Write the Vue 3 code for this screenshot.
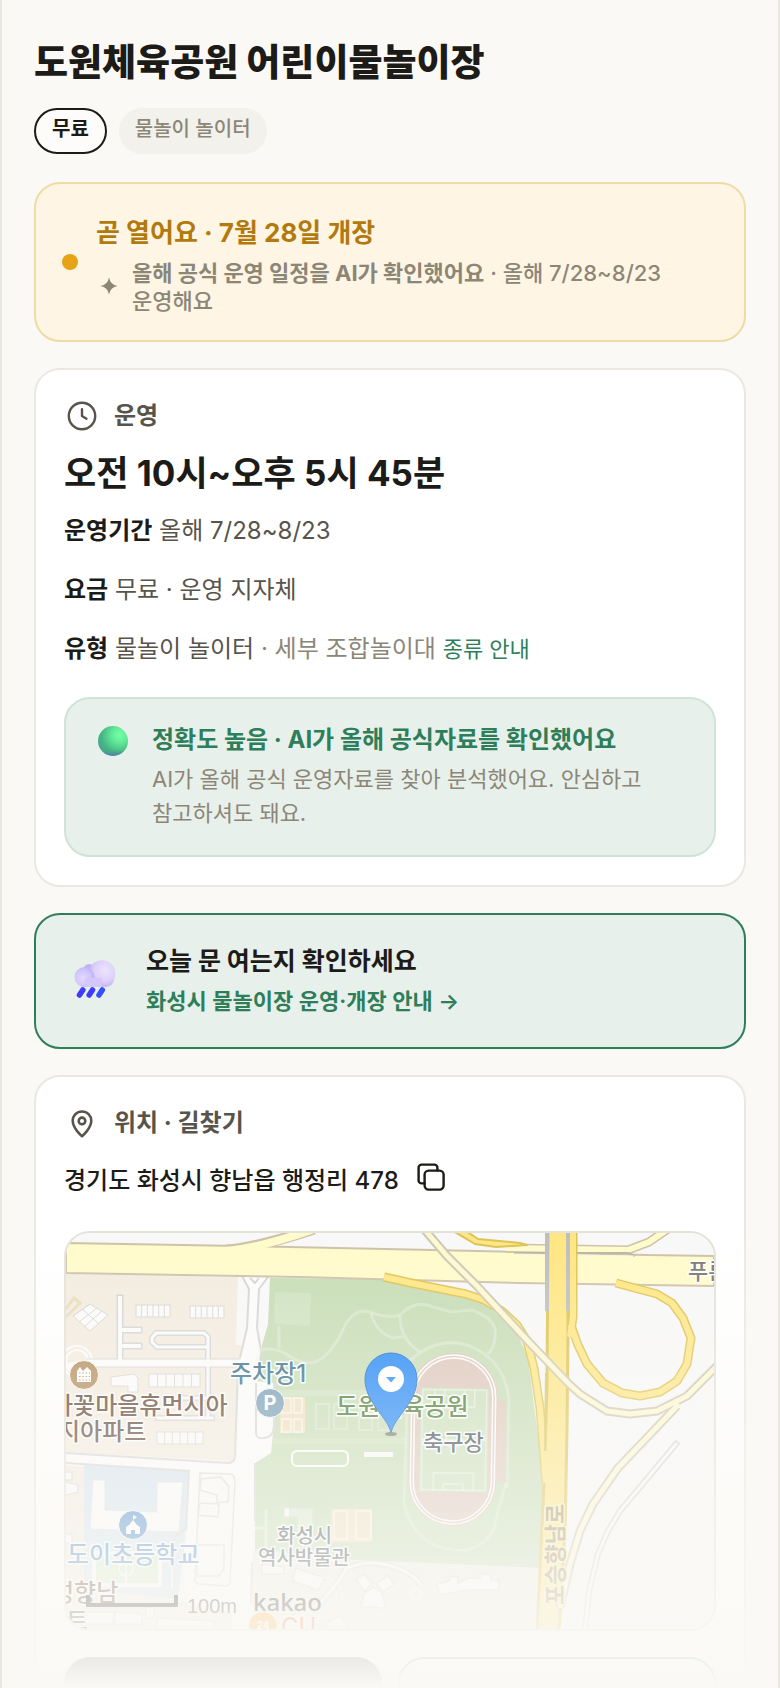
<script setup>
const rows = [
  { label: '운영기간', value: '올해 7/28~8/23' },
  { label: '요금', value: '무료 · 운영 지자체' },
]

const carRows = [
  { x: 70, y: 72, w: 34, h: 12, n: 6 },
  { x: 124, y: 73, w: 34, h: 12, n: 6 },
  { x: 83, y: 141, w: 51, h: 13, n: 6 },
  { x: 91, y: 199, w: 46, h: 12, n: 6 },
]

const courts = [
  [216, 165, 9, 15], [228, 165, 8, 15], [216, 186, 9, 13], [228, 186, 8, 13],
]
const paleCourts = [
  [250, 171, 13, 25], [268, 171, 13, 25], [293, 174, 13, 23], [312, 174, 13, 23],
]
</script>

<template>
  <main class="page">
    <header class="head">
      <h1>도원체육공원 어린이물놀이장</h1>
      <div class="tags">
        <span class="tag tag-free">무료</span>
        <span class="tag">물놀이 놀이터</span>
      </div>
    </header>

    <section class="status">
      <span class="dot"></span>
      <div class="status-body">
        <h2>곧 열어요 · 7월 28일 개장</h2>
        <div class="note">
          <svg class="spark" viewBox="0 0 26 26" aria-hidden="true">
            <path d="M13 3.500Q14.300 10.700 21.500 12Q14.300 13.300 13 20.500Q11.700 13.300 4.500 12Q11.700 10.700 13 3.500Z" fill="currentColor" />
          </svg>
          <p><strong>올해 공식 운영 일정을 AI가 확인했어요</strong> · 올해 7/28~8/23 운영해요</p>
        </div>
      </div>
    </section>

    <section class="card">
      <h2 class="card-title">
        <svg viewBox="0 0 24 24" aria-hidden="true" fill="none" stroke="currentColor" stroke-width="1.6" stroke-linecap="round" stroke-linejoin="round">
          <circle cx="12" cy="12" r="8.800" />
          <path d="M12 7.400V12L15 13.800" />
        </svg>
        운영
      </h2>
      <p class="hours">오전 10시~오후 5시 45분</p>
      <div class="rows">
        <p v-for="r in rows" :key="r.label"><b>{{ r.label }}</b> {{ r.value }}</p>
        <p><b>유형</b> 물놀이 놀이터 <span class="muted">· 세부 조합놀이대</span> <a href="#types">종류 안내</a></p>
      </div>
      <div class="trust">
        <svg class="orb" viewBox="0 0 30 30" aria-hidden="true">
          <defs>
            <radialGradient id="orb" cx="0.720" cy="0.300" r="0.800">
              <stop offset="0" stop-color="#72ffa6" />
              <stop offset="0.300" stop-color="#63ec98" />
              <stop offset="0.750" stop-color="#45b582" />
              <stop offset="1" stop-color="#4aa391" />
            </radialGradient>
            <linearGradient id="orbShade" x1="0" y1="0" x2="0" y2="1">
              <stop offset="0.800" stop-color="#5279a8" stop-opacity="0" />
              <stop offset="1" stop-color="#5279a8" stop-opacity="0.800" />
            </linearGradient>
          </defs>
          <circle cx="15" cy="15" r="15" fill="url(#orb)" />
          <circle cx="15" cy="15" r="15" fill="url(#orbShade)" />
        </svg>
        <div>
          <h3>정확도 높음 · AI가 올해 공식자료를 확인했어요</h3>
          <p>AI가 올해 공식 운영자료를 찾아 분석했어요. 안심하고 참고하셔도 돼요.</p>
        </div>
      </div>
    </section>

    <a class="notice" href="#today">
      <svg class="cloud" viewBox="0 0 48 48" aria-hidden="true">
        <defs>
          <radialGradient id="cl" cx="0.620" cy="0.380" r="0.650">
            <stop offset="0" stop-color="#eee4fc" />
            <stop offset="0.650" stop-color="#dccffa" />
            <stop offset="1" stop-color="#bdb0f2" />
          </radialGradient>
          <radialGradient id="cs" cx="0.400" cy="0.550" r="0.620">
            <stop offset="0" stop-color="#e2dafd" />
            <stop offset="0.600" stop-color="#d2c7fc" />
            <stop offset="1" stop-color="#bbb0f8" />
          </radialGradient>
        </defs>
        <circle cx="17" cy="12.500" r="5.500" fill="#beb4f5" />
        <rect x="4" y="14" width="38" height="16" rx="8" fill="#cdc1f8" />
        <circle cx="30" cy="16.500" r="13.300" fill="url(#cl)" />
        <circle cx="12.500" cy="20" r="10" fill="url(#cs)" />
        <path d="M13 21h17v9H13z" fill="#d4c8fb" />
        <g stroke-width="5.500" stroke-linecap="round">
          <path d="M10.800 33L7.500 38" stroke="#4139fb" />
          <path d="M20.500 33L17.200 38" stroke="#3a3dff" />
          <path d="M30.300 33L27 38" stroke="#3450ff" />
        </g>
      </svg>
      <span>
        <b>오늘 문 여는지 확인하세요</b>
        <em>화성시 물놀이장 운영·개장 안내 →</em>
      </span>
    </a>

    <section class="card">
      <h2 class="card-title">
        <svg viewBox="0 0 24 24" aria-hidden="true" fill="none" stroke="currentColor" stroke-width="1.7" stroke-linejoin="round">
          <path d="M12 20.800s6.200-5.200 6.200-10.300a6.200 6.200 0 0 0-12.400 0c0 5.100 6.200 10.300 6.200 10.300z" />
          <circle cx="12" cy="10.600" r="2.200" />
        </svg>
        위치 · 길찾기
      </h2>
      <div class="address">
        <span>경기도 화성시 향남읍 행정리 478</span>
        <button type="button" class="copy" aria-label="주소 복사">
          <svg viewBox="0 0 28 28" fill="none" stroke="currentColor" stroke-width="2.4" stroke-linejoin="round" stroke-linecap="round">
            <rect x="7.600" y="7.600" width="19" height="19" rx="4" />
            <path d="M7.600 20.400H4.600a3 3 0 0 1-3-3V4.600a3 3 0 0 1 3-3H17.400a3 3 0 0 1 3 3V7.600" />
          </svg>
        </button>
      </div>

      <div class="map">
        <svg viewBox="0 0 648 396" preserveAspectRatio="xMidYMid slice" role="img" aria-label="지도">
          <rect width="648" height="396" fill="#f8f8f8" />

          <!-- blocks -->
          <path d="M0 41L172 44L170 112L176 112L174 150L171 215L168 228L0 219Z" fill="#f3ebdf" />
          <path d="M0 232L18 234V396H0Z" fill="#f3ebdf" />
          <path d="M18 232L124 238L120 300L112 366L18 360Z" fill="#d3e2ee" />
          <path d="M18 354L166 376V396H0V360Z" fill="#f3ebdf" />
          <path d="M185 318L476 333V396H185Z" fill="#f0ece3" />
          <path d="M204 45L316 46L400 63L420 72L450 97L462 125L478 250L476 335L274 326L189 316V200L192 135L195 116L202 91Z" fill="#c5dcb3" />

          <!-- residential details -->
          <g fill="#fbfbfb" stroke="#d9d5d0" stroke-width="1">
            <g v-for="(c, i) in carRows" :key="i">
              <rect :x="c.x" :y="c.y" :width="c.w" :height="c.h" />
              <path v-for="k in c.n - 1" :key="k" :d="`M${c.x + (c.w / c.n) * k} ${c.y}v${c.h}`" />
            </g>
            <path d="M7 83L24 71L42 82L24 98Z" />
            <path d="M13 89L31 75M18 94L36 78M16 76L33 91M24 71L7 83" />
            <path d="M45 144L68 141L72 145V159H62V153L45 153Z" />
          </g>
          <path d="M0 76L8 65L14 70L0 84" fill="none" stroke="#e8dcb8" stroke-width="3" />
          <g fill="none" stroke="#fdfcfa" stroke-width="2">
            <circle cx="11" cy="128" r="11" /><circle cx="11" cy="128" r="15" />
          </g>
          <g fill="none" stroke="#d3d3d3" stroke-linecap="square" stroke-linejoin="round" stroke-width="7">
            <path d="M54 65V128M54 97H73M54 113H73" />
            <path d="M142 125V104L138 100H90L86 105V109L91 114H141M142 131V184M92 185H146M142 165H115" stroke-width="6" />
          </g>
          <path d="M20 130H176" stroke="#d3d3d3" stroke-width="9" />
          <g fill="none" stroke="#fbfbfb" stroke-linecap="square" stroke-linejoin="round" stroke-width="4">
            <path d="M54 65V128M54 97H73M54 113H73" />
            <path d="M142 125V104L138 100H90L86 105V109L91 114H141M142 131V184M92 185H146M142 165H115" stroke-width="3" />
          </g>
          <path d="M0 134L20 130H176" fill="none" stroke="#fcfcfc" stroke-width="7" />

          <!-- white local roads -->
          <path d="M176 43L183 56L181 95L174 128L169 227L165 232L0 221V230L123 236L122 300L118 340L122 372L167 380V396H187L186 330L189 230L205 220L208 190V150L190 148L191 95L193 56L202 44Z" fill="#fcfcfc" />
          <path d="M176 43L183 56L181 95L174 125M172 134L169 224Q168 230 162 230L0 220M0 230L123 238L120 296Q110 299 108 308L106 360M202 44L193 56L191 95L197 128M190 150V200Q190 206 198 205Q208 204 208 192V150M189 230V288M186 330L185 370M184 45L189 50L193 45" fill="none" stroke="#d6d4d2" stroke-width="2" />
          <path d="M189 295H200M200 276V315" stroke="#fcfcfc" stroke-width="3" />

          <!-- school -->
          <path d="M27 247H39V277L91 279V249H117L113 299L24 296Z" fill="#fbfbfb" stroke="#dcdfe2" />
          <rect x="28" y="320" width="66" height="32" fill="#d9e8c6" stroke="#fafafa" stroke-width="4" />
          <circle cx="60" cy="336" r="7" fill="none" stroke="#f4f7ee" stroke-width="2" />
          <path d="M60 320V352M106 310V356" stroke="#f6f6f2" stroke-width="2" />
          <g fill="#fafafa" stroke="#dddbd6" stroke-width="1.500">
            <path d="M134 240L165 241Q169 243 169 248L164 350Q163 353 160 353L132 351Q128 349 129 345Z" />
            <path d="M135 246L155 244L163 254L162 269H151V262L134 257ZM134 270L153 271L152 284L132 282Z" />
            <path d="M131 312H158V336L153 343H131Z" />
            <path d="M0 239H6V247H0M0 249L12 252V259L0 262M0 301H6V310H0" />
            <path d="M20 379L48 379L47 391L20 391ZM49 379L76 381V391H49ZM92 385L148 388V396H90ZM80 374H88V385H80Z" />
            <path d="M218 275H247V300H231V284H218Z" />
            <path d="M196 331L218 334V341H196ZM230 335L259 345L252 357L226 348Z" />
            <path d="M290 347L298 341L306 350L299 359ZM310 351L322 342L328 351L317 359ZM295 374L298 361L307 354L317 361L319 375Z" />
            <path d="M371 351L384 348V343L392 344V350L402 345H414V341H425V348L433 347V357H402L374 362Z" />
            <path d="M260 390L275 382L282 396H262Z" />
          </g>
          <path d="M250 374Q272 352 280 336Q300 326 325 333Q348 340 355 352" fill="none" stroke="#dedbd5" stroke-width="6" />
          <path d="M250 374Q272 352 280 336Q300 326 325 333Q348 340 355 352" fill="none" stroke="#fafafa" stroke-width="3" />
          <circle cx="350" cy="361" r="5" fill="none" stroke="#fafafa" stroke-width="2" />
          <g fill="none" stroke="#fafafa"><circle cx="256" cy="364" r="15" /><circle cx="256" cy="364" r="20" /></g>

          <!-- park details -->
          <path d="M209 59L245 60L244 93L208 91Z" fill="#ffffff" fill-opacity="0.170" />
          <g fill="none" stroke="#ffffff" stroke-opacity="0.280" stroke-width="3">
            <path d="M213 93V115M195 117Q210 113 225 124Q246 137 261 121Q273 108 279 92Q290 74 304 79Q321 86 334 82Q350 66 367 74L386 79L405 77Q433 86 429 105Q428 115 422 121" />
            <path d="M305 80Q310 100 327 105L340 103M334 83Q334 108 356 120M340 131Q375 98 410 116Q438 130 443 165L441 255" />
            <path d="M341 175L338 270Q350 320 400 317Q428 310 430 285L440 250" />
            <path d="M212 160H340M190 208H340" stroke-width="6" stroke-opacity="0.140" />
            <rect v-for="(c, i) in paleCourts" :key="i" :x="c[0]" :y="c[1]" :width="c[2]" :height="c[3]" stroke-width="2" />
          </g>
          <path d="M223 262H245V256L261 258V300H223ZM192 269H206V320H189V300" fill="#bfd8ac" fill-opacity="0.550" />
          <g fill="#f0dfbd" stroke="#fbf5e9" stroke-width="1.500">
            <path d="M214 164H239V200H214Z" stroke="none" />
            <rect v-for="(c, i) in courts" :key="i" :x="c[0]" :y="c[1]" :width="c[2]" :height="c[3]" />
            <path d="M265 276H306V309H265Z" stroke="none" />
            <rect x="268" y="278" width="13" height="28" /><rect x="290" y="278" width="15" height="28" />
          </g>
          <rect x="226" y="218" width="56" height="15" rx="5" fill="none" stroke="#ffffff" stroke-width="2" />
          <rect x="298" y="219" width="29" height="5" fill="#fafafa" />

          <!-- running track -->
          <path d="M430 167H440V250H428Z" fill="#dfc8bc" />
          <g transform="rotate(1 387 206)">
            <rect x="343" y="120" width="88" height="173" rx="44" fill="#dcc5b9" />
            <rect x="354" y="155" width="68" height="104" fill="#c9dfb8" />
            <g fill="none" stroke="#ffffff">
              <rect x="345" y="122" width="84" height="169" rx="42" stroke-width="1.500" />
              <rect x="348" y="125" width="78" height="163" rx="39" stroke-width="1.500" />
            </g>
            <g fill="none" stroke="#ffffff" stroke-opacity="0.450" stroke-width="1.500">
              <rect x="356" y="157" width="64" height="100" />
              <path d="M368 157V174H408V157M378 157V163H398V157M368 257V240H408V257M378 257V251H398V257M356 207H420" />
              <circle cx="388" cy="207" r="8" />
            </g>
          </g>

          <!-- ramps and avenues -->
          <g fill="none" stroke-linejoin="round">
            <path d="M160 17Q190 15 248 -4" stroke="#cdc0a8" stroke-width="11" />
            <path d="M0 10L174 13L367 17L580 22L648 23V53L454 50L234 44L0 40Z" fill="#fffbca" stroke="#cdc0a8" stroke-width="2" />
            <path d="M160 18Q190 16 248 -4" stroke="#fffbca" stroke-width="8" />
            <path d="M440 15L562 17L583 9L602 -4" stroke="#cdc0a8" stroke-width="9" />
            <path d="M440 15L562 17L583 9L602 -4" stroke="#fffbca" stroke-width="6" />
            <path d="M387 -2H400L412 6L454 10L461 12L430 14L409 11Z" stroke="#dcc250" stroke-width="2" fill="#ffe680" />
            <path d="M448 20H562L569 23" stroke="#bcb39b" stroke-width="2" />
            <path d="M448 21L568 23" stroke="#f3f2f0" stroke-width="1" />

            <g stroke="#dcc250" stroke-width="9">
              <path d="M318 44L345 50L400 61L418 67L436 78L451 92L461 108L468 135L474 175L480 250" />
              <path d="M506 95L512 112L521 131L537 150L556 160L574 163L594 159L611 148L621 131L625 105L617 85L606 70L591 61L550 50" />
              <path d="M507 -3V84L504 104" />
            </g>
            <path d="M482 -3H502V100L501 198L499 298L493 400H471L478 251L481 150Z" fill="#ffe680" stroke="#dcc250" stroke-width="3" />
            <g stroke="#ffe680" stroke-width="6">
              <path d="M318 44L345 50L400 61L418 67L436 78L451 92L461 108L468 135L474 175L480 250" />
              <path d="M504 90L512 112L521 131L537 150L556 160L574 163L594 159L611 148L621 131L625 105L617 85L606 70L591 61L550 50" />
              <path d="M507 -3V84L504 104" />
            </g>
            <path d="M502 78V92M480 140L479 218" stroke="#dcc250" stroke-width="2" />
            <path d="M481 -2V78M502 -2V78" stroke="#bdbdbd" stroke-width="4" />

            <path d="M358 -4L381 23L411 53L460 106L502 150L514 161L541 178L564 181L591 178L621 163L652 132M611 173L552 235L527 271L514 298L504 331L494 375" stroke="#cdc6b3" stroke-width="9" />
            <path d="M358 -4L381 23L411 53L460 106L502 150L514 161L541 178L564 181L591 178L621 163L652 132M613 171L552 235L527 271L514 298L504 331L494 375" stroke="#fdf9cf" stroke-width="5" />
            <path d="M610 211L554 278L542 298L532 321L523 358L519 398" stroke="#d5d3d0" stroke-width="6" stroke-linecap="square" />
            <path d="M610 211L554 278L542 298L532 321L523 358L519 398" stroke="#fafafa" stroke-width="3" stroke-linecap="square" />
          </g>

          <!-- place markers -->
          <g stroke="#ffffff" stroke-width="1">
            <circle cx="18" cy="142" r="14.500" fill="#b18959" />
            <circle cx="204" cy="170" r="14.500" fill="#7198b2" />
            <circle cx="67" cy="292" r="14.500" fill="#4586c8" />
            <circle cx="197" cy="393" r="14.500" fill="#ffa51e" />
          </g>
          <path d="M11 149V138L14 134L17 138L21 134L25 138V149Z" fill="#ffffff" />
          <path d="M13 140H24M13 143.500H24M13 147H24" stroke="#b18959" stroke-width="1.200" stroke-dasharray="1.500 1.800" />
          <path d="M60 301V294L63 292L67 287L71 292L74 294V301H69V297H65V301ZM67 282L71 284L67 287Z" fill="#ffffff" />

          <g class="labels">
            <text x="204" y="177" class="t20 white" text-anchor="middle">P</text>
            <text x="197" y="396" class="t10 white" text-anchor="middle">24</text>
            <text x="164" y="149" class="t24" fill="#2e6987">주차장1</text>
            <text x="270" y="182" class="t24" fill="#3f7323">도원체육공원</text>
            <text x="357" y="217" class="t22" fill="#343f4a">축구장</text>
            <text x="622" y="46" class="t22" fill="#77756c">푸른</text>
            <text x="-15" y="181" class="t24" fill="#553928">하꽃마을휴먼시아</text>
            <text x="-8" y="207" class="t24" fill="#553928">지아파트</text>
            <text x="1" y="330" class="t24" fill="#4586c8">도이초등학교</text>
            <text x="211" y="310" class="t20" fill="#364349">화성시</text>
            <text x="192" y="332" class="t20" fill="#364349">역사박물관</text>
            <text x="-14" y="368" class="t24" fill="#553928">성향남</text>
            <text x="0" y="396" class="t24" fill="#553928">트</text>
            <text x="215" y="402" class="t24" fill="#f06a2a">CU</text>
            <text x="497" y="372" class="t22 road" transform="rotate(-90 497 372)">포승향남로</text>
          </g>
          <path d="M22 362V372H110V362" fill="none" stroke="#111111" stroke-width="4" />
          <text x="121" y="380" class="scale">100m</text>
          <text x="187" y="378" class="brand">kakao</text>

          <!-- pin -->
          <ellipse cx="325" cy="201" rx="6" ry="2" fill="#333333" fill-opacity="0.600" />
          <path d="M325 200C322 184 299 170 299 146A26 26 0 0 1 351 146C351 170 328 184 325 200Z" fill="#1a83f8" stroke="#0e63cc" />
          <circle cx="325" cy="146" r="13" fill="#ffffff" />
          <path d="M320 144H330L325 149.500Z" fill="#1a83f8" />
        </svg>
      </div>

      <div class="actions">
        <button type="button" class="go" aria-label="길찾기"></button>
        <button type="button" class="view" aria-label="지도 보기"></button>
      </div>
    </section>

    <div class="fade"></div>
  </main>
</template>

<style>
html,
body {
  background: #faf9f5;
}
</style>

<style scoped>
* {
  box-sizing: border-box;
}

.page {
  position: relative;
  height: 100vh;
  overflow: hidden;
  padding: 38px 32px 0;
  border: 0 solid #e9e7df;
  border-width: 0 2px;
  display: flex;
  flex-direction: column;
  gap: 26px;
  color: #1d1b17;
  font-family: Inter, "Noto Sans CJK KR", sans-serif;
  font-weight: 500;
  word-break: keep-all;
}

h1,
h2,
h3,
p {
  margin: 0;
}

.page > * {
  flex-shrink: 0;
}

.head {
  display: flex;
  flex-direction: column;
  gap: 20px;
  margin-bottom: 2px;
}

h1 {
  font-size: 37px;
  line-height: 50px;
  font-weight: 800;
}

.tags {
  display: flex;
  gap: 12px;
}

.tag {
  height: 46px;
  padding: 0 16px;
  border-radius: 23px;
  background: #f2f1ec;
  color: #8c8677;
  font-size: 20px;
  line-height: 42px;
}

.tag-free {
  border: 2px solid #1d1b17;
  background: #fdfcfa;
  color: #1d1b17;
  line-height: 38px;
  font-weight: 700;
}

.status {
  display: flex;
  align-items: center;
  gap: 18px;
  min-height: 160px;
  padding: 22px 26px;
  border: 2px solid #efdba6;
  border-radius: 26px;
  background: #fff5e4;
}

.dot {
  flex: none;
  width: 16px;
  height: 16px;
  border-radius: 50%;
  background: #e6a317;
}

.status-body {
  padding-top: 4px;
}

.status h2 {
  color: #b27a0c;
  font-size: 26px;
  line-height: 40px;
  font-weight: 700;
}

.note {
  display: flex;
  align-items: center;
  gap: 10px;
  margin-top: 6px;
  color: #8c8677;
  font-size: 22px;
  line-height: 28px;
}

.note strong {
  font-weight: 700;
}

.spark {
  flex: none;
  width: 26px;
  height: 26px;
}

.card {
  padding: 28px;
  border: 2px solid #eae8e1;
  border-radius: 26px;
  background: #ffffff;
}

.card-title {
  display: flex;
  align-items: center;
  gap: 14px;
  color: #58544b;
  font-size: 24px;
  line-height: 36px;
  font-weight: 700;
}

.card-title svg {
  width: 36px;
  height: 36px;
}

.hours {
  margin-top: 17px;
  font-size: 35px;
  line-height: 44px;
  font-weight: 700;
}

.rows {
  display: flex;
  flex-direction: column;
  gap: 19px;
  margin-top: 16px;
  color: #58544b;
  font-size: 24px;
  line-height: 40px;
  font-weight: 400;
}

.rows b {
  color: #1d1b17;
}

.muted {
  color: #8c8677;
}

.rows a {
  color: #2f7e5a;
  font-size: 22px;
  text-decoration: none;
}

.trust {
  display: flex;
  gap: 24px;
  margin-top: 28px;
  padding: 23px 28px 25px 32px;
  border: 2px solid #cfe3d8;
  border-radius: 26px;
  background: #e8f0eb;
}

.orb {
  flex: none;
  width: 30px;
  height: 30px;
  margin-top: 4px;
}

.trust h3 {
  color: #2f7e5a;
  font-size: 24px;
  line-height: 36px;
  font-weight: 700;
}

.trust p {
  margin-top: 4px;
  color: #8c8677;
  font-size: 22px;
  line-height: 34px;
  font-weight: 400;
}

.notice {
  display: flex;
  align-items: center;
  gap: 26px;
  min-height: 136px;
  padding: 24px 36px;
  border: 2px solid #2f7e5a;
  border-radius: 26px;
  background: #e8f0eb;
  color: #1d1b17;
  text-decoration: none;
}

.cloud {
  flex: none;
  width: 48px;
  height: 48px;
}

.notice b,
.notice em {
  display: block;
  font-style: normal;
  line-height: 40px;
}

.notice b {
  font-size: 25px;
}

.notice em {
  color: #2f7e5a;
  font-size: 22px;
  font-weight: 600;
}

.address {
  display: flex;
  align-items: center;
  gap: 18px;
  margin-top: 18px;
  font-size: 24px;
  line-height: 44px;
}

.copy {
  padding: 0 0 8px;
  border: 0;
  background: none;
  color: #1d1b17;
  line-height: 0;
}

.copy svg {
  width: 28px;
  height: 28px;
}

.map {
  height: 400px;
  margin-top: 28px;
  border: 2px solid #e3e1d8;
  border-radius: 26px;
  overflow: hidden;
}

.map svg {
  display: block;
  width: 100%;
  height: 100%;
}

.labels {
  font-weight: 500;
  paint-order: stroke;
  stroke: #ffffff;
  stroke-width: 3px;
  stroke-linejoin: round;
}

.t10 {
  font-size: 10px;
}

.t20 {
  font-size: 20px;
}

.t22 {
  font-size: 22px;
}

.t24 {
  font-size: 24px;
}

.white {
  fill: #ffffff;
  stroke: none;
  font-weight: 700;
}

.road {
  fill: #9c8d5c;
  stroke: #fff0b0;
  font-weight: 700;
}

.scale {
  fill: #333333;
  font-family: "Liberation Sans", sans-serif;
  font-size: 20px;
  font-weight: 400;
}

.brand {
  fill: #111111;
  font-family: "Noto Sans", sans-serif;
  font-size: 24px;
}

.actions {
  display: grid;
  grid-template-columns: 1fr 1fr;
  gap: 16px;
  margin-top: 26px;
}

.actions button {
  height: 96px;
  border-radius: 26px;
}

.go {
  border: 0;
  background: #1d1b17;
}

.view {
  border: 2px solid #2f7e5a;
  background: #ffffff;
}

.fade {
  position: absolute;
  right: -2px;
  bottom: 0;
  left: -2px;
  height: 460px;
  background: linear-gradient(rgba(250, 249, 245, 0), #faf9f5);
  pointer-events: none;
}
</style>
